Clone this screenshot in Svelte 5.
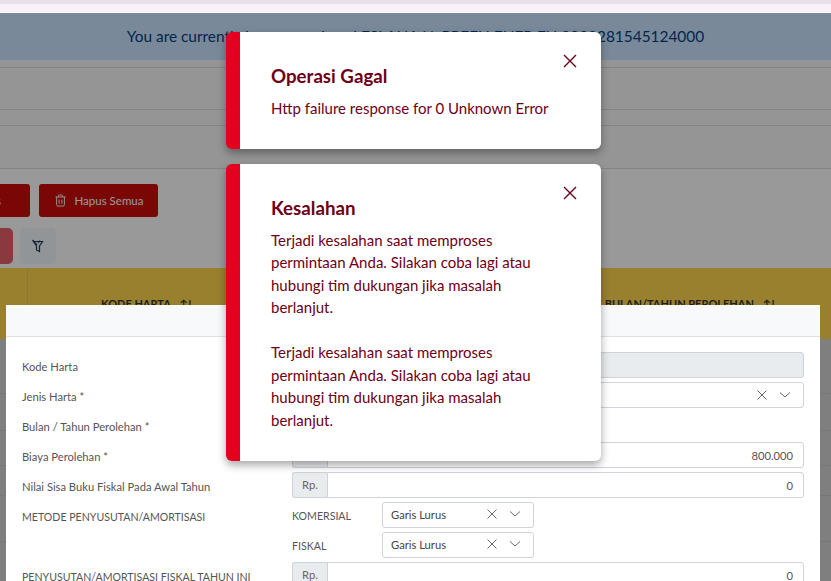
<script lang="ts">
  const rows = [
    { label: "Kode Harta", kind: "disabled" },
    { label: "Jenis Harta *", kind: "select" },
    { label: "Bulan / Tahun Perolehan *", kind: "date" },
    { label: "Biaya Perolehan *", kind: "money", value: "800.000" },
    { label: "Nilai Sisa Buku Fiskal Pada Awal Tahun", kind: "money", value: "0" },
    { label: "METODE PENYUSUTAN/AMORTISASI", kind: "method", caps: true },
    { label: "PENYUSUTAN/AMORTISASI FISKAL TAHUN INI", kind: "money", value: "0", caps: true }
  ];
  const methods = ["KOMERSIAL", "FISKAL"];
  const tableRows = [55, 37, 35, 30, 46, 60];
  const message =
    "Terjadi kesalahan saat memproses permintaan Anda. Silakan coba lagi atau hubungi tim dukungan jika masalah berlanjut.";
</script>

{#snippet closeIcon()}
  <svg class="x" viewBox="0 0 12 12" width="12" height="12"><path d="M1.5 1.5l9 9M10.5 1.5l-9 9" /></svg>
{/snippet}
{#snippet chevron()}
  <svg class="chev" viewBox="0 0 12 8" width="12" height="8"><path d="M1 1.5l5 4.5 5-4.5" /></svg>
{/snippet}

<div class="strip"></div>
<div class="stage">
  <div class="banner">You are currently impersonating : LESLANA N. PREEN ENER FN 0002281545124000</div>
  <div class="line r1"></div>
  <div class="line r2"></div>
  <div class="line r3"></div>
  <div class="line r4"></div>

  <div class="actions">
    <button class="danger wide">Hapus</button>
    <button class="danger">
      <svg viewBox="0 0 14 14" width="13" height="13"><path d="M1.5 3.2h11M4.8 3.2V2q0-1 1-1h2.4q1 0 1 1v1.2M2.8 3.2v8.3q0 1.5 1.5 1.5h5.4q1.5 0 1.5-1.5V3.2M5.5 6v4.5M8.5 6v4.5" /></svg>
      Hapus Semua
    </button>
  </div>
  <div class="tools">
    <div class="tool red"></div>
    <div class="tool">
      <svg viewBox="0 0 14 14" width="14" height="14"><path d="M2.5 2.5h9L8.5 7v5.5L5.5 11V7zM1.5 1l4.5 5M9 1.5L7 4" /></svg>
    </div>
  </div>

  <div class="thead">
    <span class="col first"></span>
    <span class="th kode">KODE HARTA <small>↑↓</small></span>
    <span class="th bulan">BULAN/TAHUN PEROLEHAN <small>↑↓</small></span>
  </div>
  <div class="tbody">
    {#each tableRows as h}
      <div class="trow" style="height: {h}px"></div>
    {/each}
  </div>

  <div class="backdrop"></div>

  <div class="modal">
    <div class="modal-head"></div>
    <div class="modal-body">
      {#each rows as row}
        <div class="label" class:caps={row.caps}>{row.label}</div>
        <div class="field">
          {#if row.kind === "disabled"}
            <div class="input disabled"></div>
          {:else if row.kind === "select"}
            <div class="input select"><span class="grow"></span>{@render closeIcon()}{@render chevron()}</div>
          {:else if row.kind === "date"}
            <div class="input date"></div>
          {:else if row.kind === "money"}
            <div class="group">
              <span class="addon">Rp.</span>
              <div class="input amount">{row.value}</div>
            </div>
          {:else}
            <div class="methods">
              {#each methods as m}
                <div class="method">
                  <span class="mlabel">{m}</span>
                  <div class="input select small"><span class="grow">Garis Lurus</span>{@render closeIcon()}{@render chevron()}</div>
                </div>
              {/each}
            </div>
          {/if}
        </div>
      {/each}
    </div>
  </div>

  <div class="toasts">
    <div class="toast">
      <button class="close" aria-label="Tutup"><svg viewBox="0 0 14 14" width="14" height="14"><path d="M1 1l12 12M13 1L1 13" /></svg></button>
      <h3>Operasi Gagal</h3>
      <p>Http failure response for 0 Unknown Error</p>
    </div>
    <div class="toast tall">
      <button class="close" aria-label="Tutup"><svg viewBox="0 0 14 14" width="14" height="14"><path d="M1 1l12 12M13 1L1 13" /></svg></button>
      <h3>Kesalahan</h3>
      <p>{message}</p>
      <p class="second">{message}</p>
    </div>
  </div>
</div>

<style>
  :global(body) {
    font-family: Lato, "Open Sans", sans-serif;
    overflow: hidden;
    background: #fff;
  }
  .strip {
    height: 12px;
    background: linear-gradient(#e9e1e8 0 4px, #f9f1f9 4px);
    border-bottom: 1px solid #fff;
  }
  .stage {
    position: relative;
    height: 568px;
    overflow: hidden;
    background: #fff;
  }
  .banner {
    box-sizing: border-box;
    height: 47px;
    padding-bottom: 2px;
    display: flex;
    align-items: center;
    justify-content: center;
    background: #cce5ff;
    color: #004085;
    font-size: 15.4px;
  }
  .line {
    border-bottom: 1px solid #ddd;
    background: #f8f8f8;
  }
  .r1 { height: 7px; }
  .r2 { height: 41px; }
  .r3 { height: 15px; }
  .r4 { height: 42px; }
  .actions {
    display: flex;
    gap: 9px;
    margin: 15px 0 0 -60px;
  }
  .danger {
    height: 33px;
    width: 119px;
    padding: 0;
    border: none;
    border-radius: 3px;
    display: flex;
    align-items: center;
    justify-content: center;
    gap: 8px;
    background: #cc0a0a;
    color: #fff;
    font: inherit;
    font-size: 11.5px;
  }
  .danger.wide { width: 90px; }
  .danger svg {
    fill: none;
    stroke: #fff;
    stroke-width: 1;
  }
  .tools {
    display: flex;
    gap: 7px;
    margin: 11px 0 0 -23px;
  }
  .tool {
    width: 36px;
    height: 36px;
    border-radius: 5px;
    background: #f2f8fc;
    display: flex;
    align-items: center;
    justify-content: center;
  }
  .tool.red { background: #e6616a; }
  .tool svg {
    fill: none;
    stroke: #263a52;
    stroke-width: 1.2;
  }
  .thead {
    position: relative;
    margin-top: 4px;
    height: 71px;
    background: #ffd54f;
    color: #333;
    font-size: 11px;
    font-weight: 700;
    display: flex;
  }
  .col.first {
    width: 27px;
    border-right: 1px solid #e8c860;
  }
  .th {
    margin-top: 29px;
    white-space: nowrap;
  }
  .th small {
    font-size: 11px;
    margin-left: 6px;
    letter-spacing: -2px;
  }
  .kode { margin-left: 73px; }
  .bulan { margin-left: 413px; }
  .tbody {
    height: 300px;
    background: #d4d4d4;
  }
  .trow {
    box-sizing: border-box;
    border-bottom: 1px solid #c6c6c6;
  }
  .backdrop {
    position: absolute;
    inset: 0;
    background: rgba(0, 0, 0, 0.4);
  }
  .modal {
    position: absolute;
    left: 6px;
    top: 292px;
    width: 814px;
    height: 300px;
    background: #fff;
    color: #555;
    font-size: 11.2px;
  }
  .modal-head {
    height: 31px;
    background: #f8f9fa;
    border-bottom: 1px solid #dee2e6;
  }
  .modal-body {
    padding: 15px 16px 0;
    display: grid;
    grid-template-columns: 270px 512px;
    row-gap: 4px;
  }
  .label {
    height: 26px;
    line-height: 30px;
    white-space: nowrap;
  }
  .label.caps { font-size: 10.6px; }
  .input {
    box-sizing: border-box;
    height: 26px;
    border: 1px solid #ced4da;
    border-radius: 3px;
    background: #fff;
  }
  .disabled { background: #e9ecef; }
  .date { width: 200px; border: none; }
  .select {
    display: flex;
    align-items: center;
    padding: 0 8px;
    color: #444;
  }
  .select.small { padding-bottom: 2px; }
  .grow { flex: 1; }
  .x { fill: none; stroke: #666; stroke-width: 1; margin-right: 11px; }
  .chev { fill: none; stroke: #666; stroke-width: 1; margin-right: 4px; }
  .group { display: flex; }
  .addon {
    box-sizing: border-box;
    width: 35px;
    height: 26px;
    line-height: 24px;
    text-align: center;
    border: 1px solid #ced4da;
    border-right: none;
    border-radius: 3px 0 0 3px;
    background: #e9ecef;
    color: #666;
  }
  .amount {
    flex: 1;
    border-radius: 0 3px 3px 0;
    text-align: right;
    line-height: 26px;
    padding-right: 10px;
    color: #555;
  }
  .methods {
    display: flex;
    flex-direction: column;
    gap: 4px;
    grid-row: span 2;
  }
  .method { display: flex; align-items: center; }
  .mlabel { width: 90px; padding-top: 2px; font-size: 10.6px; }
  .small { width: 152px; }
  .toasts {
    position: absolute;
    left: 226px;
    top: 19px;
    width: 375px;
    display: flex;
    flex-direction: column;
    gap: 15px;
  }
  .toast {
    position: relative;
    box-sizing: border-box;
    padding: 32px 50px 29px 31px;
    background: #fff;
    border-left: 14px solid #e60020;
    border-radius: 6px;
    box-shadow: 0 4px 8px rgba(0, 0, 0, 0.35);
    color: #6d0018;
    font-size: 15px;
    line-height: 22.5px;
  }
  .toast.tall { padding-bottom: 30px; }
  .toast h3 {
    margin: 0 0 9px;
    font-size: 18.7px;
    line-height: 24px;
    font-weight: 700;
  }
  .toast p { margin: 0; }
  .toast p.second { margin-top: 22.5px; }
  .close {
    position: absolute;
    top: 22px;
    right: 24px;
    padding: 0;
    border: none;
    background: none;
    line-height: 0;
  }
  .close svg {
    fill: none;
    stroke: #6d0018;
    stroke-width: 1.4;
  }
</style>
